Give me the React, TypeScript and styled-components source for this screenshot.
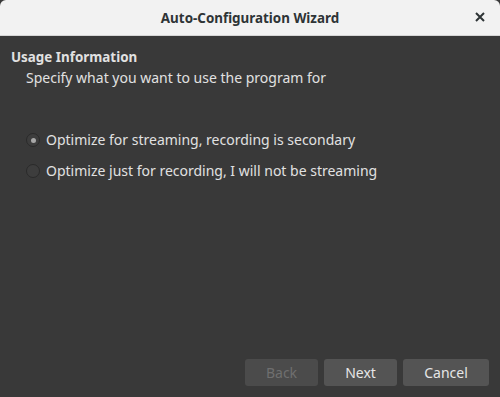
import React from 'react';
import styled, { createGlobalStyle } from 'styled-components';

const Global = createGlobalStyle`
  html, body { margin: 0; padding: 0; background: #393939; }
  body { font-family: 'Noto Sans', 'Open Sans', sans-serif; }
`;

const Window = styled.div`
  width: 500px;
  height: 397px;
  display: flex;
  flex-direction: column;
  background: #393939;
  color: #e1e1e1;
  font-size: 14px;
`;

const TitleBar = styled.div`
  height: 35px;
  flex: none;
  display: flex;
  align-items: center;
  justify-content: center;
  position: relative;
  background: #f2f2f2;
  border-radius: 6px 6px 0 0;
  border-bottom: 1px solid #d6d6d6;
  color: #2e3436;
  font-weight: 700;
  font-size: 13.4px;
`;

const CloseButton = styled.div`
  position: absolute;
  right: 14px;
  top: 11px;
  width: 12px;
  height: 12px;
  display: flex;
`;

const Body = styled.div`
  flex: 1;
  display: flex;
  flex-direction: column;
  padding: 11px 11px 11px 11px;
`;

const Heading = styled.div`
  font-weight: 700;
  font-size: 13.4px;
  line-height: 21px;
`;

const Subtitle = styled.div`
  padding-left: 15px;
  line-height: 20px;
`;

const Options = styled.div`
  display: flex;
  flex-direction: column;
  gap: 11px;
  margin-top: 42px;
  padding-left: 15px;
`;

const Option = styled.label`
  display: flex;
  align-items: center;
  gap: 6px;
  line-height: 20px;
`;

const Radio = styled.span<{ $checked?: boolean }>`
  width: 12px;
  height: 12px;
  border-radius: 50%;
  border: 1px solid #2a2a2a;
  background: #3d3d3d;
  display: flex;
  align-items: center;
  justify-content: center;
  &::after {
    content: '';
    width: 5px;
    height: 5px;
    border-radius: 50%;
    background: ${p => (p.$checked ? '#a8a8a8' : 'transparent')};
  }
`;

const Footer = styled.div`
  margin-top: auto;
  display: flex;
  justify-content: flex-end;
  gap: 6px;
`;

const Button = styled.div<{ $disabled?: boolean; $w: number }>`
  width: ${p => p.$w}px;
  height: 27px;
  border-radius: 3px;
  background: ${p => (p.$disabled ? '#4b4b4b' : '#545454')};
  color: ${p => (p.$disabled ? '#6f6f6f' : '#e6e6e6')};
  display: flex;
  align-items: center;
  justify-content: center;
  font-size: 14px;
`;

export default function App() {
  return (
    <>
      <Global />
      <Window>
        <TitleBar>
          Auto-Configuration Wizard
          <CloseButton>
            <svg width="12" height="12" viewBox="0 0 12 12">
              <path d="M2 2 L10 10 M10 2 L2 10" stroke="#2e3436" strokeWidth="2" />
            </svg>
          </CloseButton>
        </TitleBar>
        <Body>
          <Heading>Usage Information</Heading>
          <Subtitle>Specify what you want to use the program for</Subtitle>
          <Options>
            <Option>
              <Radio $checked />
              Optimize for streaming, recording is secondary
            </Option>
            <Option>
              <Radio />
              Optimize just for recording, I will not be streaming
            </Option>
          </Options>
          <Footer>
            <Button $w={73} $disabled>Back</Button>
            <Button $w={73}>Next</Button>
            <Button $w={86}>Cancel</Button>
          </Footer>
        </Body>
      </Window>
    </>
  );
}
